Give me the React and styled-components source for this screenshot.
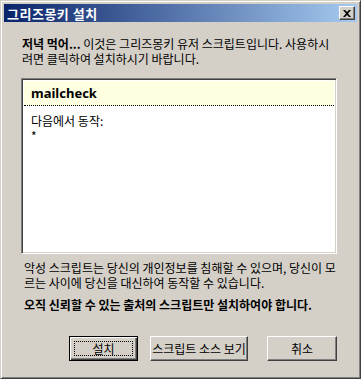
import React from 'react';
import styled, { createGlobalStyle } from 'styled-components';

const FACE = '#d4d0c8';
const FONT = '"Noto Sans CJK KR", "Noto Sans", sans-serif';

const GlobalStyle = createGlobalStyle`
    html, body {
        margin: 0;
        padding: 0;
        background: ${FACE};
    }
    #root {
        width: 361px;
        height: 379px;
    }
`;

const Window = styled.div`
    box-sizing: border-box;
    width: 361px;
    height: 379px;
    background: ${FACE};
    border: 1px solid;
    border-color: ${FACE} #404040 #404040 ${FACE};
    box-shadow: inset 1px 1px 0 #fff, inset -1px -1px 0 #808080;
    padding: 3px 3px 0 3px;
    display: flex;
    flex-direction: column;
    font-family: ${FONT};
    font-size: 12px;
    color: #000;
`;

const TitleBar = styled.div`
    height: 18px;
    display: flex;
    align-items: center;
    justify-content: space-between;
    padding: 0 2px 0 3px;
    background: linear-gradient(to right, #0a246a, #a6caf0);
`;

const Title = styled.span`
    color: #fff;
    font-weight: bold;
    font-size: 13px;
    letter-spacing: 0.5px;
`;

const CloseButton = styled.div`
    box-sizing: border-box;
    width: 16px;
    height: 14px;
    background: ${FACE};
    border: 1px solid;
    border-color: #fff #404040 #404040 #fff;
    box-shadow: inset -1px -1px 0 #808080;
    display: flex;
    align-items: center;
    justify-content: center;
`;

const Body = styled.div`
    flex: 1;
    display: flex;
    flex-direction: column;
    padding: 14px 20px 0 17px;
`;

const Intro = styled.p`
    margin: 0;
    line-height: 15px;
    white-space: nowrap;
    padding-left: 1px;

    b {
        font-weight: bold;
    }
`;

const ScriptBox = styled.div`
    margin-top: 12px;
    box-sizing: border-box;
    width: 316px;
    height: 176px;
    background: #fff;
    border: 1px solid;
    border-color: #808080 #fff #fff #808080;
    box-shadow: inset 1px 1px 0 #404040, inset -1px -1px 0 ${FACE};
    padding: 2px;
    display: flex;
    flex-direction: column;
`;

const ScriptName = styled.div`
    height: 24px;
    background: #ffffe1;
    border-bottom: 1px dotted #000;
    display: flex;
    align-items: center;
    padding-left: 7px;
    font-weight: bold;
    font-size: 13px;
    font-family: "Noto Sans", ${FONT};
`;

const Includes = styled.div`
    padding: 7px 7px;
    line-height: 15px;
`;

const Warning = styled.p`
    margin: 6px 0 0 0;
    line-height: 15px;
    white-space: nowrap;
    padding-left: 3px;
`;

const Strong = styled.p`
    margin: 7px 0 0 0;
    line-height: 15px;
    white-space: nowrap;
    font-weight: bold;
    padding-left: 3px;
`;

const ButtonRow = styled.div`
    display: flex;
    justify-content: flex-end;
    gap: 12px;
    margin-top: 24px;
`;

const Button = styled.div`
    box-sizing: border-box;
    width: ${(p) => p.$width}px;
    height: 25px;
    margin-left: ${(p) => p.$offset || 0}px;
    background: ${FACE};
    border: 1px solid;
    border-color: ${(p) => (p.$default ? '#000' : '#fff #404040 #404040 #fff')};
    box-shadow: ${(p) =>
        p.$default
            ? 'inset 1px 1px 0 #fff, inset -1px -1px 0 #404040, inset -2px -2px 0 #808080'
            : 'inset -1px -1px 0 #808080'};
    display: flex;
    align-items: center;
    justify-content: center;
    position: relative;
`;

const FocusRing = styled.span`
    position: absolute;
    inset: 4px;
    border: 1px dotted #000;
`;

const Label = styled.span`
    position: relative;
    font-size: 12px;
`;

const App = () => {
    return (
        <>
            <GlobalStyle />
            <Window>
                <TitleBar>
                    <Title>그리즈몽키 설치</Title>
                    <CloseButton>
                        <svg width="8" height="7" viewBox="0 0 8 7">
                            <path d="M0 0h2l2 2 2-2h2L5 3.5 8 7H6L4 5 2 7H0l3-3.5z" fill="#000" />
                        </svg>
                    </CloseButton>
                </TitleBar>
                <Body>
                    <Intro>
                        <b>저녁 먹어...</b> 이것은 그리즈몽키 유저 스크립트입니다. 사용하시
                        <br />
                        려면 클릭하여 설치하시기 바랍니다.
                    </Intro>
                    <ScriptBox>
                        <ScriptName>mailcheck</ScriptName>
                        <Includes>
                            다음에서 동작:
                            <br />*
                        </Includes>
                    </ScriptBox>
                    <Warning>
                        악성 스크립트는 당신의 개인정보를 침해할 수 있으며, 당신이 모
                        <br />
                        르는 사이에 당신을 대신하여 동작할 수 있습니다.
                    </Warning>
                    <Strong>오직 신뢰할 수 있는 출처의 스크립트만 설치하여야 합니다.</Strong>
                    <ButtonRow>
                        <Button $width={69} $default>
                            <FocusRing />
                            <Label>설치</Label>
                        </Button>
                        <Button $width={98}>
                            <Label>스크립트 소스 보기</Label>
                        </Button>
                        <Button $width={70} $offset={7}>
                            <Label>취소</Label>
                        </Button>
                    </ButtonRow>
                </Body>
            </Window>
        </>
    );
};

export default App;
